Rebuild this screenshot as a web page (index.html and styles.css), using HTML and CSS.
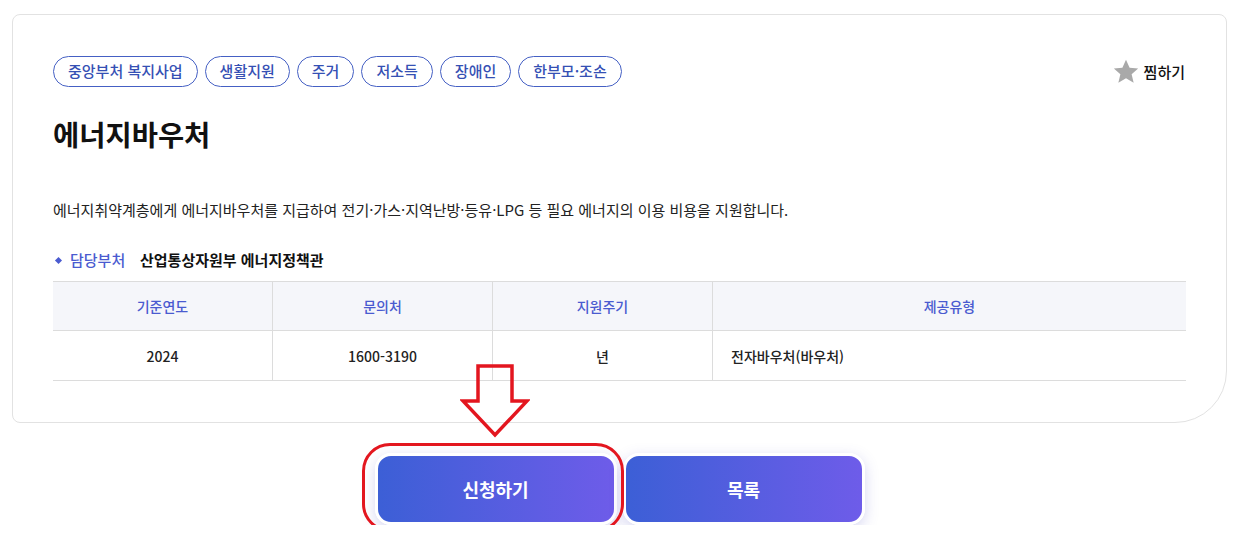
FILE: index.html
```html
<!DOCTYPE html>
<html lang="ko">
<head>
    <meta charset="UTF-8">
    <meta name="viewport" content="width=device-width, initial-scale=1.0">
    <link rel="stylesheet" href="styles.css">
    <title>에너지바우처</title>
</head>
<body>
    <div class="wrap">
        <!-- Detail card -->
        <div class="card">
            <div class="card-top">
                <ul class="tags">
                    <li>중앙부처 복지사업</li>
                    <li>생활지원</li>
                    <li>주거</li>
                    <li>저소득</li>
                    <li>장애인</li>
                    <li>한부모·조손</li>
                </ul>
                <button class="fav">
                    <svg width="28" height="27" viewBox="0 0 24 24"><path d="M12 1.5l3.2 7.1 7.6.7-5.8 5.1 1.8 7.6L12 18l-6.8 4 1.8-7.6L1.2 9.3l7.6-.7z" fill="#a9a9a9"/></svg>
                    찜하기
                </button>
            </div>

            <h1 class="title">에너지바우처</h1>

            <p class="desc">에너지취약계층에게 에너지바우처를 지급하여 전기·가스·지역난방·등유·LPG 등 필요 에너지의 이용 비용을 지원합니다.</p>

            <div class="dept">
                <span class="dept-label">담당부처</span>
                <span class="dept-value">산업통상자원부 에너지정책관</span>
            </div>

            <table class="info">
                <tr>
                    <th>기준연도</th>
                    <th>문의처</th>
                    <th>지원주기</th>
                    <th>제공유형</th>
                </tr>
                <tr>
                    <td>2024</td>
                    <td>1600-3190</td>
                    <td>년</td>
                    <td class="left">전자바우처(바우처)</td>
                </tr>
            </table>
        </div>

        <!-- Buttons -->
        <div class="actions">
            <button class="btn apply">신청하기</button>
            <button class="btn">목록</button>

            <!-- red annotations -->
            <svg class="mark-arrow" width="70" height="74" viewBox="0 0 70 74">
                <path d="M18 2H52V37H67L35 71L3 37H18Z" fill="none" stroke="#e3161f" stroke-width="3.5" stroke-linejoin="miter"/>
            </svg>
            <div class="mark-box"></div>
        </div>
    </div>
</body>
</html>
```

FILE: styles.css
```css
body {
    margin: 0;
    background: #fff;
    font-family: "Noto Sans CJK KR", "Noto Sans", sans-serif;
    color: #222;
}

.wrap {
    width: 1215px;
    margin-left: 12px;
    padding-top: 14px;
}

.card {
    border: 1px solid #e2e2e2;
    border-radius: 8px 8px 52px 8px;
    padding: 41px 40px 41px 40px;
}

.card-top {
    display: flex;
    justify-content: space-between;
    align-items: center;
}

.tags {
    display: flex;
    gap: 7px;
    list-style: none;
    margin: 0;
    padding: 0;
}
.tags li {
    height: 29px;
    line-height: 28px;
    padding: 0 14px;
    border: 1px solid #4560c4;
    border-radius: 16px;
    color: #3550b4;
    font-size: 15px;
    font-weight: 500;
}

.fav {
    display: flex;
    align-items: center;
    gap: 4px;
    background: none;
    border: none;
    padding: 0;
    margin-right: 1px;
    font-family: inherit;
    font-size: 15px;
    font-weight: 500;
    color: #111;
    cursor: pointer;
}

.title {
    margin: 26px 0 0 0;
    font-size: 28.5px;
    font-weight: 700;
    line-height: 42px;
    color: #111;
}

.desc {
    margin: 44px 0 0 0;
    font-size: 15px;
    line-height: 22px;
    color: #222;
}

.dept {
    display: flex;
    align-items: center;
    margin-top: 28px;
    font-size: 15px;
    line-height: 22px;
}
.dept::before {
    content: "";
    width: 5px;
    height: 5px;
    margin: 0 9px 0 3px;
    background: #4a5bd0;
    transform: rotate(45deg);
}
.dept-label {
    color: #4a5bd0;
    font-weight: 500;
    width: 70px;
}
.dept-value {
    color: #111;
    font-weight: 700;
}

.info {
    width: 100%;
    margin-top: 10px;
    border-collapse: collapse;
    font-size: 14px;
}
.info th {
    height: 48px;
    padding: 0;
    background: #f5f6fa;
    border-top: 1px solid #dcdcdc;
    border-bottom: 1px solid #dcdcdc;
    color: #4a5bd0;
    font-weight: 500;
    width: 219px;
}
.info th:last-child {
    width: auto;
}
.info td {
    height: 49px;
    padding: 0;
    border-bottom: 1px solid #dcdcdc;
    text-align: center;
    font-weight: 500;
    color: #222;
}
.info th + th, .info td + td {
    border-left: 1px solid #dcdcdc;
}
.info td.left {
    text-align: left;
    padding-left: 18px;
}

.actions {
    position: relative;
    display: flex;
    justify-content: center;
    gap: 6px;
    margin-top: 30px;
}

.btn {
    width: 242px;
    height: 72px;
    border: 3px solid #fff;
    border-radius: 16px;
    background: linear-gradient(90deg, #3c5fd6, #6e5ce9);
    box-shadow: 0 4px 14px rgba(90, 90, 200, 0.25);
    color: #fff;
    font-family: inherit;
    font-size: 18px;
    font-weight: 700;
    cursor: pointer;
}

.mark-arrow {
    position: absolute;
    left: 448px;
    top: -89px;
}

.mark-box {
    position: absolute;
    left: 350px;
    top: -10px;
    width: 256px;
    height: 83px;
    border: 3.5px solid #e3161f;
    border-radius: 28px;
}
```
